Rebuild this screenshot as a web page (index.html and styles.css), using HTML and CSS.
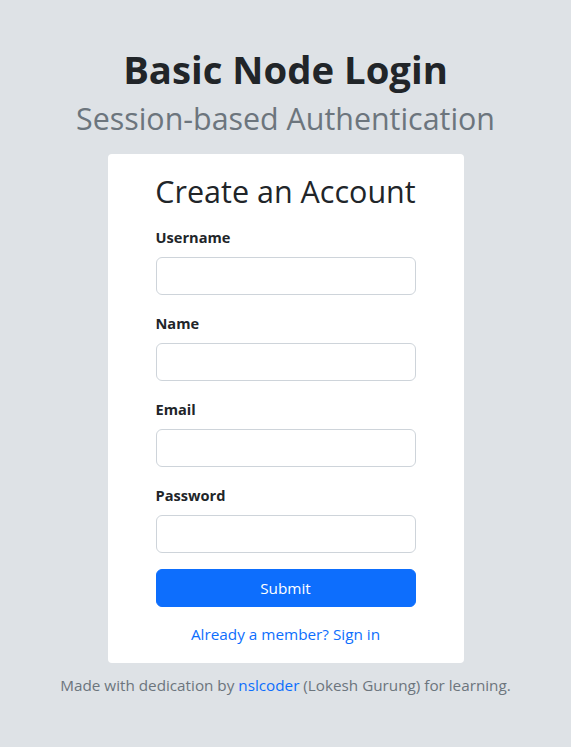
FILE: index.html
```html
<!DOCTYPE html>
<html lang="en">
<head>
<meta charset="utf-8">
<title>Basic Node Login</title>
<link rel="stylesheet" href="styles.css">
</head>
<body>
<header class="header">
  <h1 class="title">Basic Node Login</h1>
  <p class="subtitle">Session-based Authentication</p>
</header>
<main class="card">
  <h2 class="card-title">Create an Account</h2>
  <form class="form">
    <div class="field">
      <label class="label" for="username">Username</label>
      <input class="input" id="username" type="text">
    </div>
    <div class="field">
      <label class="label" for="name">Name</label>
      <input class="input" id="name" type="text">
    </div>
    <div class="field">
      <label class="label" for="email">Email</label>
      <input class="input" id="email" type="email">
    </div>
    <div class="field">
      <label class="label" for="password">Password</label>
      <input class="input" id="password" type="password">
    </div>
    <button class="btn" type="button">Submit</button>
  </form>
  <p class="signin"><a href="#">Already a member? Sign in</a></p>
</main>
<footer class="footer">
  Made with dedication by <a href="#">nslcoder</a> (Lokesh Gurung) for learning.
</footer>
</body>
</html>
```

FILE: styles.css
```css
* { box-sizing: border-box; }
html, body { margin: 0; padding: 0; }
body {
  background: #dee2e6;
  font-family: "Open Sans", "Noto Sans", sans-serif;
  color: #212529;
  font-size: 16px;
  line-height: 1.5;
}
.header {
  text-align: center;
  padding-top: 47px;
}
.title {
  margin: 0;
  font-size: 38.3px;
  font-weight: 700;
  line-height: 1.2;
  color: #212529;
}
.subtitle {
  margin: 8px 0 0;
  font-size: 30.4px;
  font-weight: 400;
  line-height: 1.2;
  color: #6c757d;
}
.card {
  width: 356px;
  margin: 17px auto 0;
  background: #fff;
  border-radius: 4px;
  padding: 19px 48px 17px;
}
.card-title {
  margin: 0 -24px 15px;
  font-size: 30.5px;
  font-weight: 400;
  line-height: 1.2;
  text-align: center;
  white-space: nowrap;
  color: #212529;
}
.form { display: flex; flex-direction: column; }
.field { display: flex; flex-direction: column; margin-bottom: 16px; }
.label {
  font-weight: 700;
  font-size: 14.6px;
  line-height: 24px;
  margin-bottom: 8px;
}
.input {
  height: 38px;
  border: 1px solid #ced4da;
  border-radius: 6px;
  background: #fff;
  padding: 6px 12px;
  font: inherit;
}
.btn {
  height: 38px;
  border: 1px solid #0d6efd;
  background: #0d6efd;
  color: #fff;
  border-radius: 6px;
  font: inherit;
  font-size: 15.3px;
}
.signin {
  margin: 16px 0 0;
  text-align: center;
  font-size: 15.3px;
}
.signin a, .footer a { color: #0d6efd; text-decoration: none; }
.footer {
  text-align: center;
  color: #6c757d;
  font-size: 15.25px;
  margin-top: 11px;
}
```
